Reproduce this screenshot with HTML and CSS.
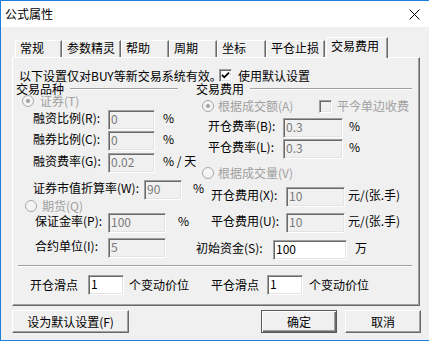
FILE: index.html
```html
<!DOCTYPE html>
<html>
<head>
<meta charset="utf-8">
<link rel="stylesheet" href="styles.css">
</head>
<body>
<div class="win">
  <div class="titlebar">
    <span class="title">公式属性</span>
    <svg class="close" width="11" height="11" viewBox="0 0 11 11"><path d="M0.5 0.5L10.5 10.5M10.5 0.5L0.5 10.5" stroke="#000" stroke-width="1" fill="none"/></svg>
  </div>
  <div class="body">
    <div class="tabs">
      <div class="tab t-w47">常规</div>
      <div class="tab t-w59">参数精灵</div>
      <div class="tab t-w48">帮助</div>
      <div class="tab t-w48">周期</div>
      <div class="tab t-w49">坐标</div>
      <div class="tab t-w59">平仓止损</div>
      <div class="tab tab-active">交易费用</div>
    </div>
    <div class="panel">
      <div class="intro">
        <span class="intro-text">以下设置仅对BUY等新交易系统有效。</span>
        <span class="check check-on"><svg width="9" height="9" viewBox="0 0 9 9"><path d="M1 4L3.3 6.3L8 1.6" stroke="#000" stroke-width="1.8" fill="none"/></svg></span>
        <span class="check-text">使用默认设置</span>
      </div>
      <div class="groups">
        <div class="col col-left">
          <div class="ghead"><span>交易品种</span><span class="etch etch-left"></span></div>
          <div class="opt opt-sec">
            <svg class="radio" width="12" height="12" viewBox="0 0 12 12"><circle cx="6" cy="6" r="5.5" fill="#f4f4f4" stroke="#a8a8a8"/><circle cx="6" cy="6" r="2" fill="#a0a0a0"/></svg>
            <span class="dis">证券(T)</span>
          </div>
          <div class="row r-rz"><span class="lbl lbl-a">融资比例(R):</span><span class="edit e-47">0</span><span class="unit u-8">%</span></div>
          <div class="row r-rq"><span class="lbl lbl-a">融券比例(C):</span><span class="edit e-47">0</span><span class="unit u-8">%</span></div>
          <div class="row r-fee"><span class="lbl lbl-a">融资费率(G):</span><span class="edit e-47">0.02</span><span class="unit u-8">% / 天</span></div>
          <div class="row r-zs"><span class="lbl lbl-zs">证券市值折算率(W):</span><span class="edit e-38">90</span><span class="unit u-11">%</span></div>
          <div class="opt opt-fut">
            <svg class="radio" width="12" height="12" viewBox="0 0 12 12"><circle cx="6" cy="6" r="5.5" fill="#f4f4f4" stroke="#a8a8a8"/></svg>
            <span class="dis">期货(Q)</span>
          </div>
          <div class="row r-bz"><span class="lbl lbl-b">保证金率(P):</span><span class="edit e-58">100</span><span class="unit u-12">%</span></div>
          <div class="row r-hy"><span class="lbl lbl-b">合约单位(I):</span><span class="edit e-58">5</span></div>
        </div>
        <div class="col col-right">
          <div class="ghead"><span>交易费用</span><span class="etch etch-right"></span></div>
          <div class="opt opt-amt">
            <svg class="radio" width="12" height="12" viewBox="0 0 12 12"><circle cx="6" cy="6" r="5.5" fill="#f4f4f4" stroke="#a8a8a8"/><circle cx="6" cy="6" r="2" fill="#a0a0a0"/></svg>
            <span class="dis opt-text-wide">根据成交额(A)</span>
            <span class="check check-dis"></span>
            <span class="dis check-text">平今单边收费</span>
          </div>
          <div class="row r-kf"><span class="lbl lbl-c">开仓费率(B):</span><span class="edit e-60">0.3</span><span class="unit u-6">%</span></div>
          <div class="row r-pf"><span class="lbl lbl-c">平仓费率(L):</span><span class="edit e-60">0.3</span><span class="unit u-6">%</span></div>
          <div class="opt opt-vol">
            <svg class="radio" width="12" height="12" viewBox="0 0 12 12"><circle cx="6" cy="6" r="5.5" fill="#f4f4f4" stroke="#a8a8a8"/></svg>
            <span class="dis">根据成交量(V)</span>
          </div>
          <div class="row r-kfy"><span class="lbl lbl-d">开仓费用(X):</span><span class="edit e-59">10</span><span class="unit u-3">元/(张.手)</span></div>
          <div class="row r-pfy"><span class="lbl lbl-d">平仓费用(U):</span><span class="edit e-59">10</span><span class="unit u-3">元/(张.手)</span></div>
          <div class="row r-cs"><span class="lbl lbl-e">初始资金(S):</span><span class="edit edit-on e-74">100</span><span class="unit u-8">万</span></div>
        </div>
      </div>
      <div class="sep"></div>
      <div class="row slip">
        <span class="lbl lbl-s1">开仓滑点</span><span class="edit edit-on e-36">1</span><span class="unit u-5 slip-unit">个变动价位</span>
        <span class="lbl lbl-s2">平仓滑点</span><span class="edit edit-on e-36">1</span><span class="unit u-6">个变动价位</span>
      </div>
    </div>
    <div class="buttons">
      <div class="btn btn-default-set">设为默认设置(F)</div>
      <div class="btn btn-ok">确定</div>
      <div class="btn btn-cancel">取消</div>
    </div>
  </div>
</div>
</body>
</html>
```

FILE: styles.css
```css
html, body {
  margin: 0;
  padding: 0;
  background: #ffffff;
}
body {
  font-family: "Noto Sans CJK SC", "Noto Sans", sans-serif;
  font-size: 12px;
  color: #000;
}
.win {
  width: 429px;
  height: 341px;
  box-sizing: border-box;
  border-top: 1px solid #1a7fd8;
  border-left: 1px solid #1a7fd8;
  border-bottom: 1px solid #1a7fd8;
  background: #f0f0f0;
  display: flex;
  flex-direction: column;
}
.titlebar {
  height: 26px;
  flex: none;
  background: #fff;
  display: flex;
  align-items: center;
  padding-left: 4px;
}
.title {
  line-height: 14px;
}
.close {
  margin-left: auto;
  margin-right: 9px;
}
.body {
  padding-top: 10px;
  padding-left: 11px;
}
.tabs {
  display: flex;
  align-items: flex-end;
  height: 20px;
  margin-left: 3px;
}
.tab {
  box-sizing: border-box;
  height: 17px;
  border-top: 1px solid #fff;
  border-left: 1px solid #fff;
  border-right: 1px solid #696969;
  box-shadow: inset -1px 0 #a0a0a0;
  border-top-left-radius: 2px;
  padding-left: 4px;
  line-height: 13px;
  white-space: nowrap;
}
.t-w47 { width: 47px; }
.t-w48 { width: 48px; }
.t-w49 { width: 49px; }
.t-w59 { width: 59px; }
.tab-active {
  width: 62px;
  height: 21px;
  margin-left: 1px;
  margin-bottom: -1px;
  padding-top: 1px;
  background: #f0f0f0;
  position: relative;
  z-index: 1;
}
.panel {
  box-sizing: border-box;
  width: 408px;
  height: 249px;
  border-top: 1px solid #fff;
  border-left: 1px solid #fff;
  border-right: 1px solid #696969;
  border-bottom: 1px solid #696969;
  box-shadow: inset -1px -1px #a0a0a0;
}
.intro {
  display: flex;
  align-items: center;
  height: 15px;
  margin-top: 10px;
  padding-left: 6px;
  white-space: nowrap;
}
.intro-text {
  width: 200px;
  flex: none;
  line-height: 15px;
}
.check {
  flex: none;
  box-sizing: border-box;
  width: 13px;
  height: 13px;
  border: 1px solid;
  border-color: #a0a0a0 #fff #fff #a0a0a0;
  box-shadow: inset 1px 1px #696969, inset -1px -1px #e3e3e3;
  display: flex;
  align-items: center;
  justify-content: center;
}
.check-on {
  background: #fff;
}
.check-dis {
  background: #f0f0f0;
}
.check-text {
  margin-left: 6px;
}
.groups {
  display: flex;
}
.col {
  display: flex;
  flex-direction: column;
  flex: none;
}
.col-left {
  margin-left: 3px;
  width: 180px;
}
.col-right {
  width: 216px;
}
.ghead {
  display: flex;
  align-items: center;
  height: 12px;
  line-height: 12px;
  white-space: nowrap;
}
.etch {
  flex: none;
  height: 0;
  border-top: 1px solid #a0a0a0;
  border-bottom: 1px solid #fff;
  margin-left: 6px;
}
.etch-left { width: 108px; }
.etch-right { width: 162px; }
.opt {
  display: flex;
  align-items: center;
  height: 12px;
  line-height: 12px;
  white-space: nowrap;
}
.radio { flex: none; }
.dis { color: #a0a0a0; }
.opt-sec { margin-left: 6px; }
.opt-sec .dis { margin-left: 6px; }
.opt-fut { margin-left: 9px; }
.opt-fut .dis { margin-left: 5px; }
.opt-amt { margin-left: 6px; margin-top: 5px; }
.opt-amt .opt-text-wide { margin-left: 4px; width: 101px; flex: none; }
.opt-vol { margin-left: 6px; margin-top: 8px; }
.opt-vol .dis { margin-left: 4px; }
.opt-amt .check-text { margin-left: 5px; }

.row {
  display: flex;
  align-items: flex-start;
  height: 20px;
  white-space: nowrap;
}
.lbl {
  flex: none;
  line-height: 16px;
}
.unit {
  flex: none;
  line-height: 16px;
}
.edit {
  flex: none;
  box-sizing: border-box;
  height: 20px;
  border: 1px solid;
  border-color: #a0a0a0 #fff #fff #a0a0a0;
  box-shadow: inset 1px 1px #696969, inset -1px -1px #e3e3e3;
  background: #f0f0f0;
  color: #7a7a7a;
  padding-left: 2px;
  line-height: 15px;
}
.edit-on {
  background: #fff;
  color: #000;
}
.e-36 { width: 36px; }
.e-38 { width: 38px; }
.e-47 { width: 47px; }
.e-58 { width: 58px; }
.e-59 { width: 59px; }
.e-60 { width: 60px; }
.e-74 { width: 74px; }
.u-3 { margin-left: 3px; }
.u-5 { margin-left: 5px; }
.u-6 { margin-left: 6px; }
.u-8 { margin-left: 8px; }
.u-11 { margin-left: 11px; }
.u-12 { margin-left: 12px; }

.lbl-a { margin-left: 17px; width: 75px; }
.lbl-zs { margin-left: 17px; width: 111px; }
.lbl-b { margin-left: 19px; width: 73px; }
.lbl-c { margin-left: 12px; width: 75px; }
.lbl-d { margin-left: 15px; width: 75px; }
.lbl-e { width: 77px; }

.r-rz { margin-top: 3px; }
.r-rq { margin-top: 1px; }
.r-fee { margin-top: 2px; }
.r-zs { margin-top: 7px; }
.r-bz { margin-top: 1px; }
.r-hy { margin-top: 5px; }
.r-kf { margin-top: 6px; }
.r-pf { margin-top: 1px; }
.r-kfy { margin-top: 8px; }
.r-pfy { margin-top: 6px; }
.r-cs { margin-top: 7px; }

.sep {
  margin-top: 5px;
  margin-left: 5px;
  width: 394px;
  height: 0;
  border-top: 1px solid #a0a0a0;
  border-bottom: 1px solid #fff;
}
.slip {
  margin-top: 8px;
  align-items: center;
}
.slip .lbl, .slip .unit { line-height: 16px; }
.lbl-s1 { margin-left: 17px; width: 58px; }
.slip-unit { width: 60px; }
.lbl-s2 { margin-left: 22px; width: 56px; }

.buttons {
  display: flex;
  margin-top: 4px;
}
.btn {
  box-sizing: border-box;
  height: 23px;
  display: flex;
  align-items: center;
  justify-content: center;
  border: 1px solid;
  border-color: #fff #696969 #696969 #fff;
  box-shadow: inset -1px -1px #a0a0a0;
  background: #f0f0f0;
  line-height: 14px;
  white-space: nowrap;
}
.btn-default-set { width: 117px; }
.btn-ok {
  width: 76px;
  margin-left: 132px;
  border-color: #5a5a5a;
  box-shadow: inset 1px 1px #fff, inset -1px -1px #696969, inset -2px -2px #a0a0a0;
}
.btn-cancel {
  width: 76px;
  margin-left: 8px;
}
```
